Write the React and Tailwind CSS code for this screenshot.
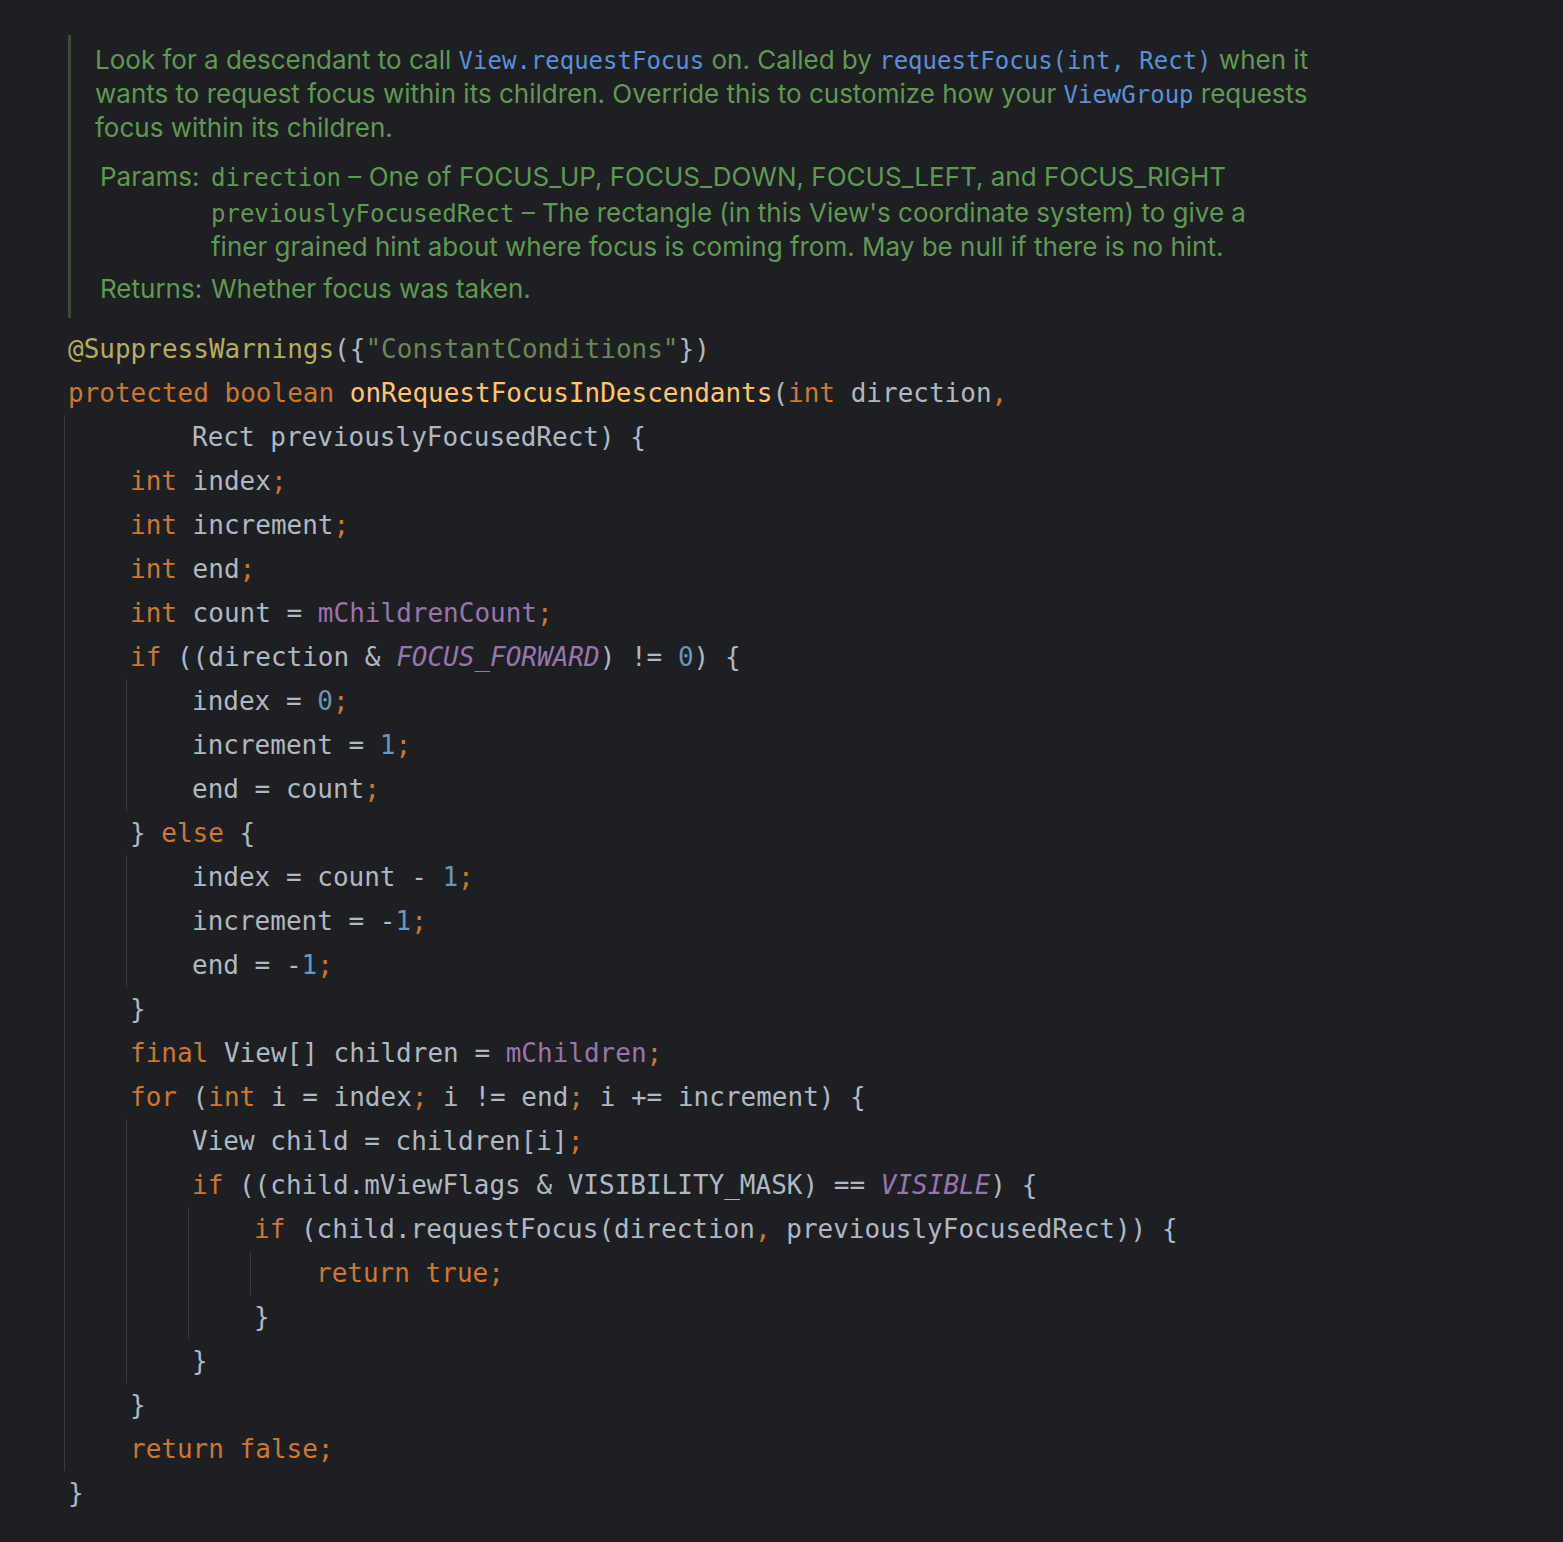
import React from 'react';

const mono = { fontFamily: '"DejaVu Sans Mono", "Liberation Mono", monospace' };

const K = ({ children }) => <span className="text-[#cc7832]">{children}</span>;
const N = ({ children }) => <span className="text-[#6897bb]">{children}</span>;
const F = ({ children }) => <span className="text-[#9876aa]">{children}</span>;
const FI = ({ children }) => <span className="text-[#9876aa] italic">{children}</span>;
const Code = ({ children }) => (
    <span className="font-['DejaVu_Sans_Mono','Liberation_Mono',monospace] text-[24px] text-[#5c8fd6]">{children}</span>
);
const DocMono = ({ children }) => (
    <span className="font-['DejaVu_Sans_Mono','Liberation_Mono',monospace] text-[24px]">{children}</span>
);

// one row of source, 44px tall
const Line = ({ top, children }) => (
    <div className={`h-[44px] leading-[44px] whitespace-pre ${top ? 'pl-[4px]' : 'pl-[65px]'}`}>{children}</div>
);

// nested block with its indent guide on the left
const Block = ({ nested, children }) => (
    <div className={`border-l border-[#3a3c41] ${nested ? 'ml-[61px]' : ''}`}>{children}</div>
);

const DocComment = () => (
    <div className="ml-[68px] mr-[200px] border-l-[3px] border-[#3c4b3a] pl-[24px] pt-[8px] pb-[12px] text-[26px] text-[#629755] font-['Inter','Noto_Sans',sans-serif]">
        <div className="h-[34px] leading-[34px] whitespace-nowrap">
            Look for a descendant to call <Code>View.requestFocus</Code> on. Called by{' '}
            <Code>requestFocus(int, Rect)</Code> when it
        </div>
        <div className="h-[34px] leading-[34px] whitespace-nowrap">
            wants to request focus within its children. Override this to customize how your{' '}
            <Code>ViewGroup</Code> requests
        </div>
        <div className="h-[34px] leading-[34px] whitespace-nowrap">focus within its children.</div>

        <div className="grid grid-cols-[111px_1fr] ml-[5px] mt-[14px]">
            <div className="h-[35px] leading-[35px]">Params:</div>
            <div className="whitespace-nowrap">
                <div className="h-[36px] leading-[35px]">
                    <DocMono>direction</DocMono> – One of FOCUS_UP, FOCUS_DOWN, FOCUS_LEFT, and FOCUS_RIGHT
                </div>
                <div className="h-[34px] leading-[35px]">
                    <DocMono>previouslyFocusedRect</DocMono> – The rectangle (in this View's coordinate system) to give a
                </div>
                <div className="h-[35px] leading-[35px]">finer grained hint about where focus is coming from. May be null if there is no hint.</div>
            </div>
        </div>
        <div className="grid grid-cols-[111px_1fr] ml-[5px] mt-[7px]">
            <div className="h-[35px] leading-[35px]">Returns:</div>
            <div className="h-[35px] leading-[35px]">Whether focus was taken.</div>
        </div>
    </div>
);

const App = () => {
    return (
        <div className="min-h-screen w-full bg-[#1e1f22] pt-[35px] pb-[28px]">
            <DocComment />

            <div className="pl-[64px] mt-[9px] text-[26px] text-[#b0b8c2]" style={mono}>
                <Line top>
                    <span className="text-[#b3ae60]">@SuppressWarnings</span>({'{'}<span className="text-[#6a8759]">"ConstantConditions"</span>{'}'})
                </Line>
                <Line top>
                    <K>protected boolean </K><span className="text-[#ffc66d]">onRequestFocusInDescendants</span>(<K>int</K> direction<K>,</K>
                </Line>
                <Block>
                    <div className="h-[44px] leading-[44px] whitespace-pre pl-[127px]">Rect previouslyFocusedRect) {'{'}</div>
                    <Line><K>int</K> index<K>;</K></Line>
                    <Line><K>int</K> increment<K>;</K></Line>
                    <Line><K>int</K> end<K>;</K></Line>
                    <Line><K>int</K> count = <F>mChildrenCount</F><K>;</K></Line>
                    <Line><K>if</K> ((direction &amp; <FI>FOCUS_FORWARD</FI>) != <N>0</N>) {'{'}</Line>
                    <Block nested>
                        <Line>index = <N>0</N><K>;</K></Line>
                        <Line>increment = <N>1</N><K>;</K></Line>
                        <Line>end = count<K>;</K></Line>
                    </Block>
                    <Line>{'}'} <K>else</K> {'{'}</Line>
                    <Block nested>
                        <Line>index = count - <N>1</N><K>;</K></Line>
                        <Line>increment = -<N>1</N><K>;</K></Line>
                        <Line>end = -<N>1</N><K>;</K></Line>
                    </Block>
                    <Line>{'}'}</Line>
                    <Line><K>final</K> View[] children = <F>mChildren</F><K>;</K></Line>
                    <Line><K>for</K> (<K>int</K> i = index<K>;</K> i != end<K>;</K> i += increment) {'{'}</Line>
                    <Block nested>
                        <Line>View child = children[i]<K>;</K></Line>
                        <Line><K>if</K> ((child.mViewFlags &amp; VISIBILITY_MASK) == <FI>VISIBLE</FI>) {'{'}</Line>
                        <Block nested>
                            <Line><K>if</K> (child.requestFocus(direction<K>,</K> previouslyFocusedRect)) {'{'}</Line>
                            <Block nested>
                                <Line><K>return true;</K></Line>
                            </Block>
                            <Line>{'}'}</Line>
                        </Block>
                        <Line>{'}'}</Line>
                    </Block>
                    <Line>{'}'}</Line>
                    <Line><K>return false;</K></Line>
                </Block>
                <Line top>{'}'}</Line>
            </div>
        </div>
    );
};

export default App;
